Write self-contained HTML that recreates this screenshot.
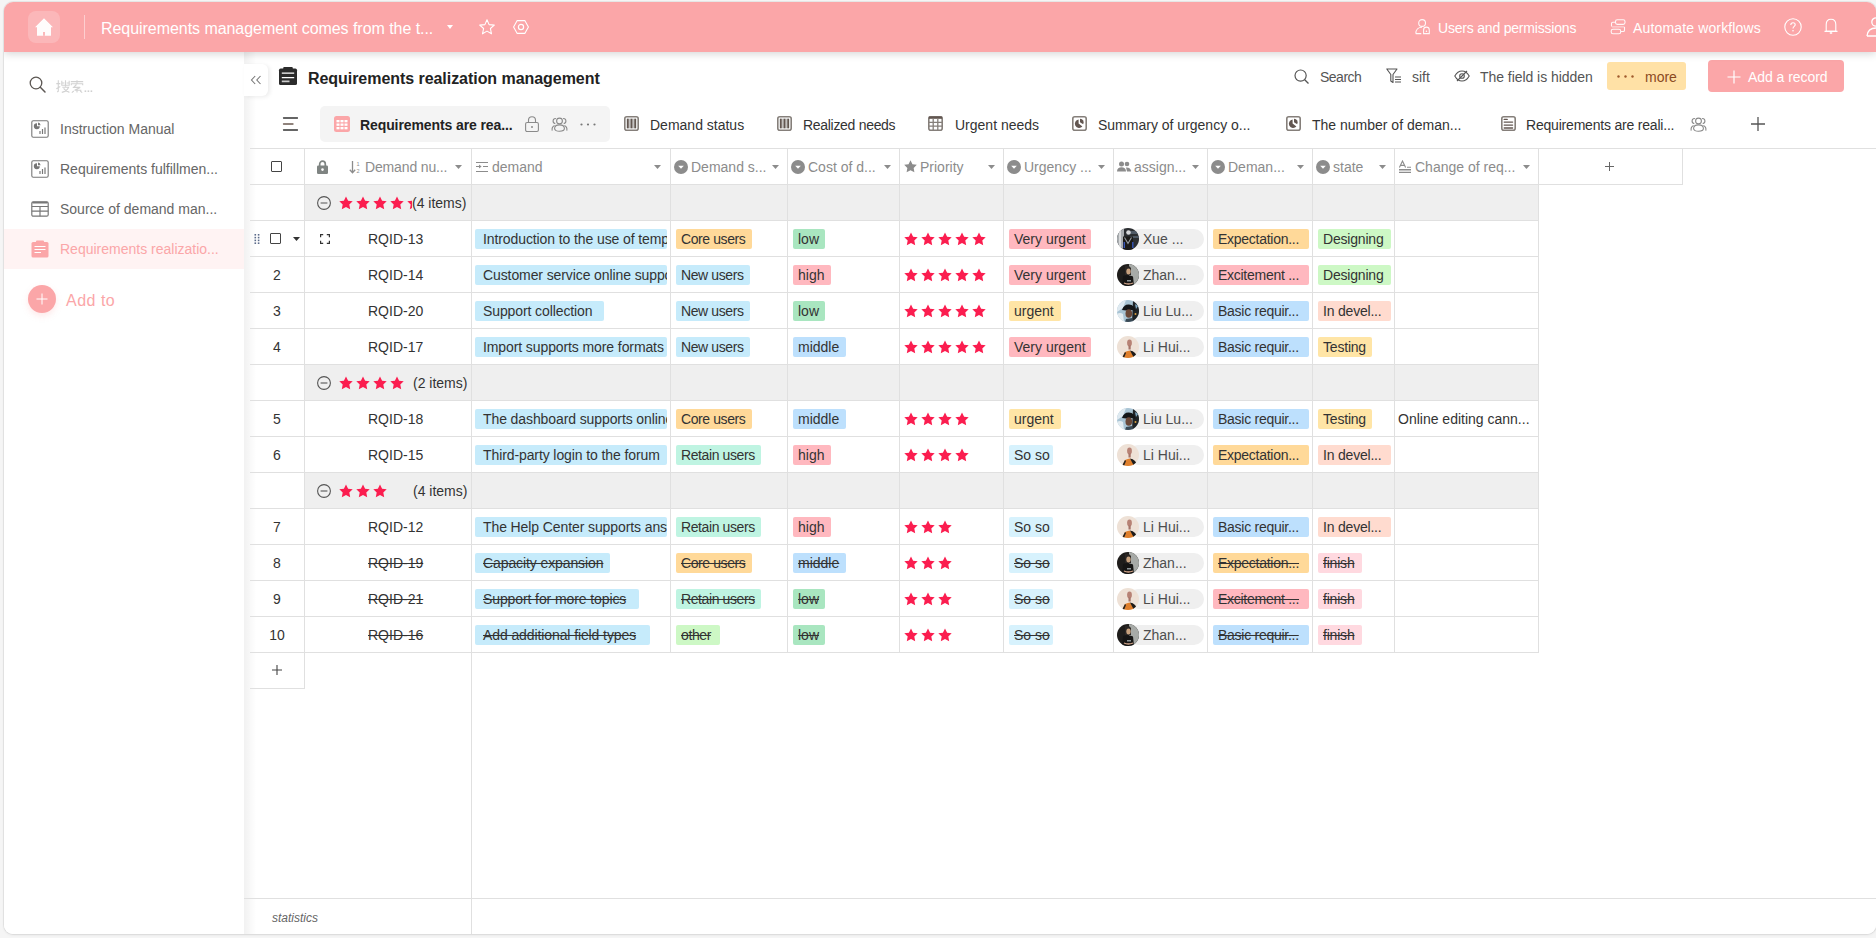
<!DOCTYPE html><html><head><meta charset="utf-8"><title>Requirements realization management</title><style>
*{box-sizing:border-box}
html,body{margin:0;padding:0}
body{width:1876px;height:938px;background:#f5f5f5;position:relative;overflow:hidden;font-family:"Liberation Sans",sans-serif;color:#333;font-size:14px}
.ab{position:absolute}
.app{position:absolute;left:4px;top:2px;width:1872px;height:932px;background:#fff;border-radius:9px;overflow:hidden;box-shadow:0 0 0 1px rgba(0,0,0,0.05),0 1px 3px rgba(0,0,0,0.08)}
.hdr{position:absolute;left:0;top:0;width:1872px;height:50px;background:#fba6a8;z-index:5;box-shadow:0 2px 8px rgba(0,0,0,0.16)}
.wt{color:#fff;white-space:nowrap;line-height:16px}
.side{position:absolute;left:0;top:50px;width:240px;height:882px;background:#fff}
.main{position:absolute;left:240px;top:50px;width:1632px;height:882px;background:#fff}
.t{position:absolute;white-space:nowrap;line-height:16px}
.tag{position:absolute;height:20px;line-height:20px;border-radius:2px;padding-left:6px;white-space:nowrap;overflow:hidden;color:#333;font-size:14px}
.hl{position:absolute;height:1px;background:#e1e1e1}
.vl{position:absolute;width:1px;background:#e1e1e1}
.grp{position:absolute;height:35px;background:#efefef}
.s{text-decoration:line-through}
svg{position:absolute;overflow:visible}
</style></head><body>
<div class="app">
<div class="hdr">
<div class="ab" style="left:24px;top:9px;width:32px;height:32px;border-radius:8px;background:rgba(255,255,255,0.2)"></div>
<svg style="left:31px;top:16px" width="18" height="18" viewBox="0 0 18 18"><path d="M9 0.3 L18 9.2 L16 9.2 L16 17.8 L2 17.8 L2 9.2 L0 9.2 Z" fill="#fff" fill-opacity="0.95"/><rect x="8" y="14" width="2" height="3.8" fill="#fbb9bb"/></svg>
<div class="ab" style="left:80px;top:13px;width:1px;height:24px;background:rgba(255,255,255,0.45)"></div>
<div class="t wt" style="left:97px;top:19px;font-size:16px;letter-spacing:-0.05px">Requirements management comes from the t...</div>
<svg style="left:443px;top:23px" width="6" height="4" viewBox="0 0 6 4"><path d="M0 0H6L3 4Z" fill="#fff"/></svg>
<svg style="left:475px;top:17px" width="16" height="16" viewBox="0 0 16 16"><path d="M8 0.8 L10.1 5.6 L15.3 6.1 L11.4 9.5 L12.5 14.8 L8 12.1 L3.5 14.8 L4.6 9.5 L0.7 6.1 L5.9 5.6 Z" fill="none" stroke="#fff" stroke-width="1.1" stroke-linejoin="round"/></svg>
<svg style="left:509px;top:18px" width="16" height="14" viewBox="0 0 16 14"><path d="M4.2 0.6 H11.8 L15.4 7 L11.8 13.4 H4.2 L0.6 7 Z" fill="none" stroke="#fff" stroke-width="1.1"/><circle cx="8" cy="7" r="2.6" fill="none" stroke="#fff" stroke-width="1.2"/></svg>
<svg style="left:1410px;top:17px" width="16" height="16" viewBox="0 0 16 16"><g fill="none" stroke="#fff" stroke-opacity="0.92" stroke-width="1.1"><circle cx="8.1" cy="4" r="3.4"/><path d="M1.8 14.6C1.8 10.8 4.4 8.2 8 8.2"/><path d="M1.8 14.6H7.3"/><path d="M9.6 14.6V11C9.6 9.3 10.9 8.1 12.45 8.1C14 8.1 15.3 9.3 15.3 11V14.6Z"/></g><circle cx="12.45" cy="12.3" r="0.8" fill="#fff"/></svg>
<div class="t wt" style="left:1434px;top:18px;font-size:14px;letter-spacing:-0.2px">Users and permissions</div>
<svg style="left:1606px;top:16px" width="16" height="17" viewBox="0 0 16 17"><g fill="none" stroke="#fff" stroke-opacity="0.9" stroke-width="1.1"><rect x="5.5" y="1.8" width="9.5" height="4.6" rx="1.8"/><rect x="1.2" y="11.2" width="9.5" height="4.5" rx="1.8"/><path d="M5.5 4.3H2.8Q1.5 4.3 1.5 5.6V8.6"/><path d="M14.5 9V12.2Q14.5 13.5 13.2 13.5H10.7"/></g><path d="M2 8.9H14.5" stroke="#fff" stroke-opacity="0.5" stroke-width="1.1"/></svg>
<div class="t wt" style="left:1629px;top:18px;font-size:14px;letter-spacing:0.15px">Automate workflows</div>
<svg style="left:1780px;top:16px" width="18" height="18" viewBox="0 0 18 18"><circle cx="9" cy="9" r="8.2" fill="none" stroke="#fff" stroke-width="1.1"/><path d="M6.8 7 C6.8 5.6 7.8 4.8 9 4.8 C10.3 4.8 11.2 5.6 11.2 6.8 C11.2 8.3 9 8.5 9 10.4" fill="none" stroke="#fff" stroke-width="1.1"/><circle cx="9" cy="12.8" r="0.8" fill="#fff"/></svg>
<svg style="left:1819px;top:16px" width="16" height="18" viewBox="0 0 16 18"><path d="M8 1.2 C5 1.2 3.2 3.6 3.2 6.6 V13.3 H12.8 V6.6 C12.8 3.6 11 1.2 8 1.2 Z" fill="none" stroke="#fff" stroke-width="1.1"/><path d="M1.5 13.3 H14.5" stroke="#fff" stroke-width="1.2"/><path d="M6.8 15 H9.2" stroke="#fff" stroke-width="1.4"/></svg>
<svg style="left:1862px;top:15px" width="16" height="20" viewBox="0 0 16 20"><circle cx="10" cy="5" r="4.2" fill="none" stroke="#fff" stroke-width="1.3"/><path d="M1 19 C1.5 13.5 5 11 10 11 C13 11 15 12 16 13" fill="none" stroke="#fff" stroke-width="1.3"/><path d="M1 19 H16" stroke="#fff" stroke-width="1.3"/></svg>
</div>
<div class="side">
<svg style="left:25px;top:24px" width="17" height="17" viewBox="0 0 17 17"><circle cx="7" cy="7" r="5.8" fill="none" stroke="#5c5753" stroke-width="1.3"/><path d="M11.3 11.3 L16 16" stroke="#5c5753" stroke-width="1.5" stroke-linecap="round"/></svg>
<svg style="left:52px;top:28px" width="38" height="13" viewBox="0 0 38 13"><g fill="none" stroke="#d2d2d2" stroke-width="1.1"><path d="M0.3 3.6H4.3M2.3 0.3V11.2L1.2 12M0.3 8.8L4.3 6.6"/><path d="M5.8 0.8V5.2H13.2V0.8M5.8 3H8.4M10.6 3H13.2M9.5 0.3V6.5M6.3 7.2H12.6C11.6 9.6 9 11.6 5.8 12.4M7.6 8.4C9 10.4 11 11.8 13.4 12.4"/><path d="M14.8 1.6H27.2M21 0.2V3.2M15.3 5.3V3.8H26.7V5.3M20.5 4.5L17.6 7.4H24.2L18.6 10.2H25.4M21 9.4V12.6M17.8 11L15.8 12.6M24.2 11L26.2 12.6"/></g><g fill="#d0d0d0"><rect x="28.6" y="10.4" width="1.6" height="1.6"/><rect x="31.6" y="10.4" width="1.6" height="1.6"/><rect x="34.6" y="10.4" width="1.6" height="1.6"/></g></svg>
<svg style="left:27px;top:68px" width="18" height="18" viewBox="0 0 18 18"><rect x="0.8" y="0.8" width="16.4" height="16.4" rx="1.5" fill="none" stroke="#777" stroke-width="1.1"/><path d="M6 3.2 A3 3 0 1 0 8.8 6.2 H6 Z" fill="#777"/><path d="M7 2.6 A3 3 0 0 1 9.6 5.2 H7Z" fill="#777"/><path d="M9 14V11M11.5 14V9M14 14V7.5" stroke="#777" stroke-width="1.2"/></svg>
<div class="t" style="left:56px;top:69px;color:#666;font-size:14px">Instruction Manual</div>
<svg style="left:27px;top:108px" width="18" height="18" viewBox="0 0 18 18"><rect x="0.8" y="0.8" width="16.4" height="16.4" rx="1.5" fill="none" stroke="#777" stroke-width="1.1"/><path d="M6 3.2 A3 3 0 1 0 8.8 6.2 H6 Z" fill="#777"/><path d="M7 2.6 A3 3 0 0 1 9.6 5.2 H7Z" fill="#777"/><path d="M9 14V11M11.5 14V9M14 14V7.5" stroke="#777" stroke-width="1.2"/></svg>
<div class="t" style="left:56px;top:109px;color:#666;font-size:14px">Requirements fulfillmen...</div>
<svg style="left:27px;top:148px" width="18" height="18" viewBox="0 0 18 18"><rect x="0.8" y="1.8" width="16.4" height="14.4" rx="1.5" fill="none" stroke="#777" stroke-width="1.2"/><path d="M0.8 6.5H17.2M0.8 11.2H17.2M9 6.5V16.2" stroke="#777" stroke-width="1.2"/><path d="M1.5 2.6H16.5" stroke="#777" stroke-width="1.6"/></svg>
<div class="t" style="left:56px;top:149px;color:#666;font-size:14px">Source of demand man...</div>
<div class="ab" style="left:0;top:177px;width:240px;height:40px;background:#fff3f3"></div>
<svg style="left:27px;top:188px" width="18" height="18" viewBox="0 0 18 18"><rect x="0.5" y="2" width="17" height="15.5" rx="1.5" fill="#fba6a8"/><rect x="5" y="0.5" width="8" height="3" rx="1" fill="#fba6a8"/><path d="M3.5 6.5H14.5M3.5 9.5H14.5M3.5 12.5H10" stroke="#fff" stroke-width="1.2"/></svg>
<div class="t" style="left:56px;top:189px;color:#fba6a8;font-size:14px">Requirements realizatio...</div>
<div class="ab" style="left:24px;top:233px;width:28px;height:28px;border-radius:14px;background:#fba6a8;box-shadow:0 3px 6px rgba(251,166,168,0.25)"></div>
<svg style="left:32px;top:241px" width="12" height="12" viewBox="0 0 12 12"><path d="M6 0.5V11.5M0.5 6H11.5" stroke="#fff" stroke-width="1"/></svg>
<div class="t" style="left:62px;top:240px;color:#fba6a8;font-size:16px;line-height:18px;letter-spacing:0.5px">Add to</div>
</div>
<div class="main">
<div class="ab" style="left:0;top:0;width:12px;height:882px;background:linear-gradient(90deg,rgba(0,0,0,0.055),rgba(0,0,0,0))"></div>
<div class="ab" style="left:0px;top:12px;width:24px;height:32px;background:#fff;border-radius:0 6px 6px 0;box-shadow:2px 1px 4px rgba(0,0,0,0.08)"></div>
<svg style="left:6px;top:23px" width="12" height="10" viewBox="0 0 12 10"><path d="M5.2 1 L1.5 5 L5.2 9 M10.5 1 L6.8 5 L10.5 9" fill="none" stroke="#777" stroke-width="1.1"/></svg>
<svg style="left:35px;top:15px" width="18" height="18" viewBox="0 0 18 18"><rect x="0" y="1.6" width="18" height="16.4" rx="1.6" fill="#2b2b2b"/><rect x="4.2" y="0" width="9.6" height="3" rx="1" fill="#2b2b2b"/><path d="M2.8 6.2H15.2M2.8 10.6H15.2" stroke="#fff" stroke-width="1.2"/><path d="M2.8 14.4H10.5" stroke="#ccc" stroke-width="1.6"/></svg>
<div class="t" style="left:64px;top:19px;font-size:16px;font-weight:bold;color:#222;letter-spacing:-0.05px">Requirements realization management</div>
<svg style="left:1050px;top:17px" width="15" height="15" viewBox="0 0 15 15"><circle cx="6.6" cy="6.6" r="5.6" fill="none" stroke="#555" stroke-width="1.2"/><path d="M10.7 10.7 L14.5 14.5" stroke="#555" stroke-width="1.3"/></svg>
<div class="t" style="left:1076px;top:17px;color:#555;letter-spacing:-0.5px">Search</div>
<svg style="left:1142px;top:16px" width="16" height="16" viewBox="0 0 16 16"><path d="M0.8 1 H11 L7 6.5 V14.5 L4.8 13 V6.5 Z" fill="none" stroke="#555" stroke-width="1.1" stroke-linejoin="round"/><path d="M9 9H15M9 11.5H15M9 14H15" stroke="#555" stroke-width="1.1"/></svg>
<div class="t" style="left:1168px;top:17px;color:#555">sift</div>
<svg style="left:1210px;top:18px" width="16" height="12" viewBox="0 0 16 12"><path d="M0.8 6 C3 2 5.5 1 8 1 C10.5 1 13 2 15.2 6 C13 10 10.5 11 8 11 C5.5 11 3 10 0.8 6 Z" fill="none" stroke="#555" stroke-width="1.1"/><circle cx="8" cy="6" r="2.3" fill="none" stroke="#555" stroke-width="1.1"/><path d="M3 11 L13 1" stroke="#555" stroke-width="1.1"/></svg>
<div class="t" style="left:1236px;top:17px;color:#555;letter-spacing:-0.05px">The field is hidden</div>
<div class="ab" style="left:1363px;top:10px;width:79px;height:28px;border-radius:3px;background:#ffe1a6"></div>
<svg style="left:1373px;top:23px" width="17" height="3" viewBox="0 0 17 3"><circle cx="1.5" cy="1.5" r="1.2" fill="#a05a2c"/><circle cx="8.5" cy="1.5" r="1.2" fill="#a05a2c"/><circle cx="15.5" cy="1.5" r="1.2" fill="#a05a2c"/></svg>
<div class="t" style="left:1401px;top:17px;color:#8b4a1f">more</div>
<div class="ab" style="left:1464px;top:8px;width:136px;height:32px;border-radius:4px;background:#fba6a8"></div>
<svg style="left:1483px;top:18px" width="14" height="14" viewBox="0 0 14 14"><path d="M7 0.5V13.5M0.5 7H13.5" stroke="#fff" stroke-width="1.2"/></svg>
<div class="t" style="left:1504px;top:17px;color:#fff;letter-spacing:-0.05px">Add a record</div>
<svg style="left:39px;top:65px" width="15" height="14" viewBox="0 0 15 14"><path d="M0.5 1H14.5M0.5 13H14.5" stroke="#333" stroke-width="1.3" stroke-linecap="round"/><path d="M0.5 7H10" stroke="#6b5a50" stroke-width="1.3" stroke-linecap="round"/></svg>
<div class="ab" style="left:76px;top:54px;width:290px;height:36px;border-radius:5px;background:#f4f4f4"></div>
<svg style="left:90px;top:64px" width="16" height="16" viewBox="0 0 16 16"><rect x="0" y="0" width="16" height="16" rx="2.5" fill="#fba6a8"/><g fill="#fff"><rect x="2.5" y="4" width="3" height="2.3"/><rect x="6.5" y="4" width="3" height="2.3"/><rect x="10.5" y="4" width="3" height="2.3"/><rect x="2.5" y="7.5" width="3" height="2.3"/><rect x="6.5" y="7.5" width="3" height="2.3"/><rect x="10.5" y="7.5" width="3" height="2.3"/><rect x="2.5" y="11" width="3" height="2.3"/><rect x="6.5" y="11" width="3" height="2.3"/><rect x="10.5" y="11" width="3" height="2.3"/></g></svg>
<div class="t" style="left:116px;top:65px;font-weight:bold;color:#222;letter-spacing:-0.1px">Requirements are rea...</div>
<svg style="left:281px;top:64px" width="14" height="16" viewBox="0 0 14 16"><rect x="0.6" y="6.5" width="12.8" height="9" rx="1.5" fill="none" stroke="#8a8a8a" stroke-width="1.1"/><path d="M3.5 6.5V4.3A3.5 3.5 0 0 1 10.5 4.3V6.5" fill="none" stroke="#8a8a8a" stroke-width="1.1"/><circle cx="7" cy="11" r="1" fill="#8a8a8a"/></svg>
<svg style="left:307px;top:65px" width="17" height="15" viewBox="0 0 17 15"><g fill="none" stroke="#8a8a8a" stroke-width="1.1"><circle cx="8.5" cy="4" r="2.9"/><path d="M3.6 11.6 C3.6 9.3 5.8 7.9 8.5 7.9 C11.2 7.9 13.4 9.3 13.4 11.6 C13.4 13.4 11.2 14.3 8.5 14.3 C5.8 14.3 3.6 13.4 3.6 11.6Z"/><path d="M4.3 6.6 A2.4 2.4 0 0 1 4.9 1.6"/><path d="M12.7 6.6 A2.4 2.4 0 0 0 12.1 1.6"/><path d="M1.2 13.6 C0.7 11.2 1.7 9.4 3.6 8.5"/><path d="M15.8 13.6 C16.3 11.2 15.3 9.4 13.4 8.5"/></g></svg>
<svg style="left:336px;top:71px" width="16" height="3" viewBox="0 0 16 3"><circle cx="1.5" cy="1.5" r="1.1" fill="#777"/><circle cx="8" cy="1.5" r="1.1" fill="#777"/><circle cx="14.5" cy="1.5" r="1.1" fill="#777"/></svg>
<svg style="left:380px;top:64px" width="15" height="15" viewBox="0 0 15 15"><rect x="0.8" y="0.8" width="13.4" height="13.4" rx="2" fill="none" stroke="#857f7a" stroke-width="1.6"/><rect x="2.6" y="2.6" width="9.8" height="9.8" fill="#c4c2c0"/><path d="M3.8 2.8V12.2M7.5 2.8V12.2M11.2 2.8V12.2" stroke="#625650" stroke-width="1.7"/></svg>
<div class="t" style="left:406px;top:65px;color:#333">Demand status</div>
<svg style="left:533px;top:64px" width="15" height="15" viewBox="0 0 15 15"><rect x="0.8" y="0.8" width="13.4" height="13.4" rx="2" fill="none" stroke="#857f7a" stroke-width="1.6"/><rect x="2.6" y="2.6" width="9.8" height="9.8" fill="#c4c2c0"/><path d="M3.8 2.8V12.2M7.5 2.8V12.2M11.2 2.8V12.2" stroke="#625650" stroke-width="1.7"/></svg>
<div class="t" style="left:559px;top:65px;color:#333;letter-spacing:-0.3px">Realized needs</div>
<svg style="left:684px;top:64px" width="15" height="15" viewBox="0 0 15 15"><rect x="0.8" y="0.8" width="13.4" height="13.4" rx="2" fill="none" stroke="#857f7a" stroke-width="1.6"/><rect x="0.8" y="0.4" width="13.4" height="2.4" fill="#625650"/><path d="M0.8 6.3H14.2M0.8 10.2H14.2M5.2 2.5V14.2M9.8 2.5V14.2" stroke="#857f7a" stroke-width="1.3"/></svg>
<div class="t" style="left:711px;top:65px;color:#333">Urgent needs</div>
<svg style="left:828px;top:64px" width="15" height="15" viewBox="0 0 15 15"><rect x="0.8" y="0.8" width="13.4" height="13.4" rx="2" fill="none" stroke="#857f7a" stroke-width="1.6"/><path d="M6.6 3.4 A4.3 4.3 0 1 0 10.4 10.5 L6.6 7.6 Z" fill="#625650"/><path d="M8 2.8 A3.6 3.6 0 0 1 11.2 8.2 L8 6.2 Z" fill="#625650"/></svg>
<div class="t" style="left:854px;top:65px;color:#333">Summary of urgency o...</div>
<svg style="left:1042px;top:64px" width="15" height="15" viewBox="0 0 15 15"><rect x="0.8" y="0.8" width="13.4" height="13.4" rx="2" fill="none" stroke="#857f7a" stroke-width="1.6"/><path d="M6.6 3.4 A4.3 4.3 0 1 0 10.4 10.5 L6.6 7.6 Z" fill="#625650"/><path d="M8 2.8 A3.6 3.6 0 0 1 11.2 8.2 L8 6.2 Z" fill="#625650"/></svg>
<div class="t" style="left:1068px;top:65px;color:#333">The number of deman...</div>
<svg style="left:1257px;top:64px" width="15" height="15" viewBox="0 0 15 15"><rect x="0.8" y="0.8" width="13.4" height="13.4" rx="2" fill="none" stroke="#857f7a" stroke-width="1.6"/><path d="M3.2 3.4H6.2" stroke="#625650" stroke-width="1.4" stroke-linecap="round"/><path d="M3.2 6.1H11.6M3.2 9.1H11.6M3.2 12H11.6" stroke="#625650" stroke-width="1.3" stroke-linecap="round"/></svg>
<div class="t" style="left:1282px;top:65px;color:#333;letter-spacing:-0.2px">Requirements are reali...</div>
<svg style="left:1446px;top:65px" width="17" height="15" viewBox="0 0 17 15"><g fill="none" stroke="#8a8a8a" stroke-width="1.1"><circle cx="8.5" cy="4" r="2.9"/><path d="M3.6 11.6 C3.6 9.3 5.8 7.9 8.5 7.9 C11.2 7.9 13.4 9.3 13.4 11.6 C13.4 13.4 11.2 14.3 8.5 14.3 C5.8 14.3 3.6 13.4 3.6 11.6Z"/><path d="M4.3 6.6 A2.4 2.4 0 0 1 4.9 1.6"/><path d="M12.7 6.6 A2.4 2.4 0 0 0 12.1 1.6"/><path d="M1.2 13.6 C0.7 11.2 1.7 9.4 3.6 8.5"/><path d="M15.8 13.6 C16.3 11.2 15.3 9.4 13.4 8.5"/></g></svg>
<svg style="left:1507px;top:65px" width="14" height="14" viewBox="0 0 14 14"><path d="M7 0V14M0 7H14" stroke="#555" stroke-width="1.3"/></svg>
<div class="ab" style="left:6px;top:96px;width:1630px;height:1px;background:#e0e0e0"></div>
<div class="ab" style="left:27px;top:109px;width:11px;height:11px;border:1.3px solid #444;border-radius:1px"></div>
<svg style="left:73px;top:108px" width="11" height="14" viewBox="0 0 11 14"><path d="M2.7 6V4A2.8 2.8 0 0 1 8.3 4V6" fill="none" stroke="#7f8482" stroke-width="1.7"/><rect x="0" y="5.6" width="11" height="8.4" rx="1.2" fill="#7f8482"/><circle cx="5.5" cy="9.6" r="1.3" fill="#fff"/></svg>
<svg style="left:105px;top:108px" width="12" height="14" viewBox="0 0 12 14"><path d="M3.5 1V12.5M0.8 9.8L3.5 12.8L6.2 9.8" fill="none" stroke="#8c8c8c" stroke-width="1.3"/><text x="7.5" y="5.5" font-size="5.5" fill="#8c8c8c" font-family="Liberation Sans">1</text><text x="7.5" y="12.5" font-size="5.5" fill="#8c8c8c" font-family="Liberation Sans">2</text></svg>
<div class="t" style="left:121px;top:107px;color:#8c8c8c;letter-spacing:-0.15px">Demand nu...</div>
<svg style="left:211px;top:113px" width="7" height="4" viewBox="0 0 7 4"><path d="M0 0H7L3.5 4Z" fill="#8c8c8c"/></svg>
<svg style="left:232px;top:109px" width="12" height="12" viewBox="0 0 12 12"><path d="M0 1.5H12M0 10.5H12M7 5.5H12M0 5.5H3.8" stroke="#8c8c8c" stroke-width="1.2"/><path d="M3 3.6L5.6 5.5L3 7.4Z" fill="#8c8c8c"/></svg>
<div class="t" style="left:248px;top:107px;color:#8c8c8c">demand</div>
<svg style="left:410px;top:113px" width="7" height="4" viewBox="0 0 7 4"><path d="M0 0H7L3.5 4Z" fill="#8c8c8c"/></svg>
<svg style="left:430px;top:108px" width="14" height="14" viewBox="0 0 14 14"><circle cx="7" cy="7" r="7" fill="#8c8c8c"/><path d="M4.2 5.8H9.8L7 8.8Z" fill="#fff"/></svg>
<div class="t" style="left:447px;top:107px;color:#8c8c8c">Demand s...</div>
<svg style="left:528px;top:113px" width="7" height="4" viewBox="0 0 7 4"><path d="M0 0H7L3.5 4Z" fill="#8c8c8c"/></svg>
<svg style="left:547px;top:108px" width="14" height="14" viewBox="0 0 14 14"><circle cx="7" cy="7" r="7" fill="#8c8c8c"/><path d="M4.2 5.8H9.8L7 8.8Z" fill="#fff"/></svg>
<div class="t" style="left:564px;top:107px;color:#8c8c8c">Cost of d...</div>
<svg style="left:640px;top:113px" width="7" height="4" viewBox="0 0 7 4"><path d="M0 0H7L3.5 4Z" fill="#8c8c8c"/></svg>
<svg style="left:660px;top:108px" width="13" height="13" viewBox="0 0 14 14"><path d="M7 0.3L9.1 4.6L13.8 5.2L10.4 8.5L11.2 13.3L7 11L2.8 13.3L3.6 8.5L0.2 5.2L4.9 4.6Z" fill="#8c8c8c"/></svg>
<div class="t" style="left:676px;top:107px;color:#8c8c8c">Priority</div>
<svg style="left:744px;top:113px" width="7" height="4" viewBox="0 0 7 4"><path d="M0 0H7L3.5 4Z" fill="#8c8c8c"/></svg>
<svg style="left:763px;top:108px" width="14" height="14" viewBox="0 0 14 14"><circle cx="7" cy="7" r="7" fill="#8c8c8c"/><path d="M4.2 5.8H9.8L7 8.8Z" fill="#fff"/></svg>
<div class="t" style="left:780px;top:107px;color:#8c8c8c">Urgency ...</div>
<svg style="left:854px;top:113px" width="7" height="4" viewBox="0 0 7 4"><path d="M0 0H7L3.5 4Z" fill="#8c8c8c"/></svg>
<svg style="left:873px;top:109px" width="14" height="11" viewBox="0 0 14 11"><circle cx="4.5" cy="3" r="2.5" fill="#8c8c8c"/><circle cx="10" cy="3" r="2.3" fill="#8c8c8c"/><path d="M0 10.5C0 7.5 2 6.3 4.5 6.3C7 6.3 9 7.5 9 10.5Z" fill="#8c8c8c"/><path d="M9 6.4C12 6.2 14 7.5 14 10.5H10Z" fill="#8c8c8c"/></svg>
<div class="t" style="left:890px;top:107px;color:#8c8c8c">assign...</div>
<svg style="left:948px;top:113px" width="7" height="4" viewBox="0 0 7 4"><path d="M0 0H7L3.5 4Z" fill="#8c8c8c"/></svg>
<svg style="left:967px;top:108px" width="14" height="14" viewBox="0 0 14 14"><circle cx="7" cy="7" r="7" fill="#8c8c8c"/><path d="M4.2 5.8H9.8L7 8.8Z" fill="#fff"/></svg>
<div class="t" style="left:984px;top:107px;color:#8c8c8c">Deman...</div>
<svg style="left:1053px;top:113px" width="7" height="4" viewBox="0 0 7 4"><path d="M0 0H7L3.5 4Z" fill="#8c8c8c"/></svg>
<svg style="left:1072px;top:108px" width="14" height="14" viewBox="0 0 14 14"><circle cx="7" cy="7" r="7" fill="#8c8c8c"/><path d="M4.2 5.8H9.8L7 8.8Z" fill="#fff"/></svg>
<div class="t" style="left:1089px;top:107px;color:#8c8c8c">state</div>
<svg style="left:1135px;top:113px" width="7" height="4" viewBox="0 0 7 4"><path d="M0 0H7L3.5 4Z" fill="#8c8c8c"/></svg>
<svg style="left:1155px;top:108px" width="13" height="13" viewBox="0 0 13 13"><path d="M0.4 7.6L3.5 1L6.6 7.6M1.5 5.4H5.5" fill="none" stroke="#8c8c8c" stroke-width="1.1"/><path d="M8 7.3H12" stroke="#8c8c8c" stroke-width="1.1"/><path d="M0 9.8H12" stroke="#8c8c8c" stroke-width="1.5"/><path d="M0 12.4H12" stroke="#8c8c8c" stroke-width="1.1"/></svg>
<div class="t" style="left:1171px;top:107px;color:#8c8c8c">Change of req...</div>
<svg style="left:1279px;top:113px" width="7" height="4" viewBox="0 0 7 4"><path d="M0 0H7L3.5 4Z" fill="#8c8c8c"/></svg>
<svg style="left:1361px;top:110px" width="9" height="9" viewBox="0 0 9 9"><path d="M4.5 0V9M0 4.5H9" stroke="#666" stroke-width="1"/></svg>
<div class="hl" style="left:1294px;top:132px;width:145px;background:#e0e0e0"></div>
<div class="vl" style="left:1438px;top:96px;height:36px;background:#e0e0e0"></div>
<div class="grp" style="left:61px;top:133px;width:1233px"></div>
<svg style="left:73px;top:144px" width="14" height="14" viewBox="0 0 14 14"><circle cx="7" cy="7" r="6.4" fill="none" stroke="#555" stroke-width="1.1"/><path d="M3.6 7H10.4" stroke="#555" stroke-width="1.1"/></svg>
<svg style="left:95px;top:144px;overflow:hidden" width="73" height="14" viewBox="0 0 73 14"><g transform="translate(0,0)"><path d="M7 0.4L9.1 4.7L13.7 5.3L10.3 8.6L11.2 13.3L7 11L2.8 13.3L3.7 8.6L0.3 5.3L4.9 4.7Z" fill="#fb1d4f"/></g><g transform="translate(17,0)"><path d="M7 0.4L9.1 4.7L13.7 5.3L10.3 8.6L11.2 13.3L7 11L2.8 13.3L3.7 8.6L0.3 5.3L4.9 4.7Z" fill="#fb1d4f"/></g><g transform="translate(34,0)"><path d="M7 0.4L9.1 4.7L13.7 5.3L10.3 8.6L11.2 13.3L7 11L2.8 13.3L3.7 8.6L0.3 5.3L4.9 4.7Z" fill="#fb1d4f"/></g><g transform="translate(51,0)"><path d="M7 0.4L9.1 4.7L13.7 5.3L10.3 8.6L11.2 13.3L7 11L2.8 13.3L3.7 8.6L0.3 5.3L4.9 4.7Z" fill="#fb1d4f"/></g><g transform="translate(68,0)"><path d="M7 0.4L9.1 4.7L13.7 5.3L10.3 8.6L11.2 13.3L7 11L2.8 13.3L3.7 8.6L0.3 5.3L4.9 4.7Z" fill="#fb1d4f"/></g></svg>
<div class="t" style="left:168px;top:143px;color:#333">(4 items)</div>
<svg style="left:10px;top:182px" width="6" height="10" viewBox="0 0 6 10"><g fill="#5b6b8a"><rect x="0.5" y="0" width="1.6" height="1.6"/><rect x="3.8" y="0" width="1.6" height="1.6"/><rect x="0.5" y="2.8" width="1.6" height="1.6"/><rect x="3.8" y="2.8" width="1.6" height="1.6"/><rect x="0.5" y="5.6" width="1.6" height="1.6"/><rect x="3.8" y="5.6" width="1.6" height="1.6"/><rect x="0.5" y="8.4" width="1.6" height="1.6"/><rect x="3.8" y="8.4" width="1.6" height="1.6"/></g></svg>
<div class="ab" style="left:26px;top:181px;width:11px;height:11px;border:1.3px solid #444;border-radius:1px"></div>
<svg style="left:49px;top:185px" width="7" height="4" viewBox="0 0 7 4"><path d="M0 0H7L3.5 4Z" fill="#333"/></svg>
<svg style="left:76px;top:182px" width="10" height="10" viewBox="0 0 10 10"><path d="M0.6 3.2V0.6H3.2M6.8 0.6H9.4V3.2M9.4 6.8V9.4H6.8M3.2 9.4H0.6V6.8" fill="none" stroke="#333" stroke-width="1.2"/></svg>
<div class="t" style="left:124px;top:179px;color:#333;">RQID-13</div>
<div class="tag" style="left:231px;top:177px;width:192px;background:#c6ebfb;padding-left:8px;letter-spacing:-0.1px">Introduction to the use of template</div>
<div class="tag" style="left:432px;top:177px;width:76px;background:#ffd999;padding-left:5px;letter-spacing:-0.4px">Core users</div>
<div class="tag" style="left:549px;top:177px;width:32px;background:#a9e6c0;padding-left:5px">low</div>
<svg style="left:660px;top:180px;overflow:hidden" width="85" height="14" viewBox="0 0 85 14"><g transform="translate(0,0)"><path d="M7 0.4L9.1 4.7L13.7 5.3L10.3 8.6L11.2 13.3L7 11L2.8 13.3L3.7 8.6L0.3 5.3L4.9 4.7Z" fill="#fb1d4f"/></g><g transform="translate(17,0)"><path d="M7 0.4L9.1 4.7L13.7 5.3L10.3 8.6L11.2 13.3L7 11L2.8 13.3L3.7 8.6L0.3 5.3L4.9 4.7Z" fill="#fb1d4f"/></g><g transform="translate(34,0)"><path d="M7 0.4L9.1 4.7L13.7 5.3L10.3 8.6L11.2 13.3L7 11L2.8 13.3L3.7 8.6L0.3 5.3L4.9 4.7Z" fill="#fb1d4f"/></g><g transform="translate(51,0)"><path d="M7 0.4L9.1 4.7L13.7 5.3L10.3 8.6L11.2 13.3L7 11L2.8 13.3L3.7 8.6L0.3 5.3L4.9 4.7Z" fill="#fb1d4f"/></g><g transform="translate(68,0)"><path d="M7 0.4L9.1 4.7L13.7 5.3L10.3 8.6L11.2 13.3L7 11L2.8 13.3L3.7 8.6L0.3 5.3L4.9 4.7Z" fill="#fb1d4f"/></g></svg>
<div class="tag" style="left:765px;top:177px;width:82px;background:#ffb8bf;padding-left:5px">Very urgent</div>
<div class="ab" style="left:884px;top:177px;width:76px;height:20px;border-radius:10px;background:#efefef"></div>
<svg style="left:873px;top:176px" width="22" height="22" viewBox="0 0 22 22"><defs><clipPath id="c1117228"><circle cx="11" cy="11" r="11"/></clipPath></defs><g clip-path="url(#c1117228)"><rect width="22" height="22" fill="#2b2e31"/><rect x="0" y="0" width="7" height="22" fill="#a9adb0"/><rect x="2" y="0" width="2" height="22" fill="#d8dadb"/><path d="M13 3H22V6H13ZM13 8H22V10H13Z" fill="#4f5a66"/><circle cx="11.5" cy="4.5" r="2.3" fill="#d6d8da"/><path d="M6 8.5 L16 8.5 L16 22 L6 22Z" fill="#1b1a18"/><path d="M7.5 9.5 L11 15.5 L14.5 9.5" fill="none" stroke="#9aa0a4" stroke-width="1.1"/><path d="M7.3 14 V20 M15.8 14 V20" stroke="#3556b8" stroke-width="1.4"/></g></svg>
<div class="t" style="left:899px;top:179px;color:#4d4d4d">Xue ...</div>
<div class="tag" style="left:969px;top:177px;width:96px;background:#ffd999;padding-left:5px;letter-spacing:-0.27px">Expectation...</div>
<div class="tag" style="left:1074px;top:177px;width:73px;background:#cdf8c5;padding-left:5px;letter-spacing:-0.2px">Designing</div>
<div class="t" style="left:6px;top:215px;width:54px;text-align:center;color:#333">2</div>
<div class="t" style="left:124px;top:215px;color:#333;">RQID-14</div>
<div class="tag" style="left:231px;top:213px;width:192px;background:#c6ebfb;padding-left:8px;letter-spacing:-0.1px">Customer service online support</div>
<div class="tag" style="left:432px;top:213px;width:73.5px;background:#c6ebfb;padding-left:5px;letter-spacing:-0.4px">New users</div>
<div class="tag" style="left:549px;top:213px;width:38px;background:#ffb8bf;padding-left:5px">high</div>
<svg style="left:660px;top:216px;overflow:hidden" width="85" height="14" viewBox="0 0 85 14"><g transform="translate(0,0)"><path d="M7 0.4L9.1 4.7L13.7 5.3L10.3 8.6L11.2 13.3L7 11L2.8 13.3L3.7 8.6L0.3 5.3L4.9 4.7Z" fill="#fb1d4f"/></g><g transform="translate(17,0)"><path d="M7 0.4L9.1 4.7L13.7 5.3L10.3 8.6L11.2 13.3L7 11L2.8 13.3L3.7 8.6L0.3 5.3L4.9 4.7Z" fill="#fb1d4f"/></g><g transform="translate(34,0)"><path d="M7 0.4L9.1 4.7L13.7 5.3L10.3 8.6L11.2 13.3L7 11L2.8 13.3L3.7 8.6L0.3 5.3L4.9 4.7Z" fill="#fb1d4f"/></g><g transform="translate(51,0)"><path d="M7 0.4L9.1 4.7L13.7 5.3L10.3 8.6L11.2 13.3L7 11L2.8 13.3L3.7 8.6L0.3 5.3L4.9 4.7Z" fill="#fb1d4f"/></g><g transform="translate(68,0)"><path d="M7 0.4L9.1 4.7L13.7 5.3L10.3 8.6L11.2 13.3L7 11L2.8 13.3L3.7 8.6L0.3 5.3L4.9 4.7Z" fill="#fb1d4f"/></g></svg>
<div class="tag" style="left:765px;top:213px;width:82px;background:#ffb8bf;padding-left:5px">Very urgent</div>
<div class="ab" style="left:884px;top:213px;width:76px;height:20px;border-radius:10px;background:#efefef"></div>
<svg style="left:873px;top:212px" width="22" height="22" viewBox="0 0 22 22"><defs><clipPath id="c1117264"><circle cx="11" cy="11" r="11"/></clipPath></defs><g clip-path="url(#c1117264)"><rect width="22" height="22" fill="#1f1d1b"/><rect x="12" y="0" width="10" height="22" fill="#a7aaa7"/><path d="M8 2 Q12 1 14 4 L14 11 L8 11Z" fill="#2a2624"/><ellipse cx="11.5" cy="7.5" rx="2.2" ry="3" fill="#c9a27e"/><path d="M6 12 Q11 10.5 16 12.5 L17 22 L5 22Z" fill="#161514"/><rect x="10" y="16" width="4" height="1.5" fill="#8e9496"/><path d="M7 19 Q11 21 16 19" stroke="#d3a58a" stroke-width="1.3" fill="none"/></g></svg>
<div class="t" style="left:899px;top:215px;color:#4d4d4d">Zhan...</div>
<div class="tag" style="left:969px;top:213px;width:96px;background:#ffb8bf;padding-left:5px;letter-spacing:-0.27px">Excitement ...</div>
<div class="tag" style="left:1074px;top:213px;width:73px;background:#cdf8c5;padding-left:5px;letter-spacing:-0.2px">Designing</div>
<div class="t" style="left:6px;top:251px;width:54px;text-align:center;color:#333">3</div>
<div class="t" style="left:124px;top:251px;color:#333;">RQID-20</div>
<div class="tag" style="left:231px;top:249px;width:129px;background:#c6ebfb;padding-left:8px;letter-spacing:-0.1px">Support collection</div>
<div class="tag" style="left:432px;top:249px;width:73.5px;background:#c6ebfb;padding-left:5px;letter-spacing:-0.4px">New users</div>
<div class="tag" style="left:549px;top:249px;width:32px;background:#a9e6c0;padding-left:5px">low</div>
<svg style="left:660px;top:252px;overflow:hidden" width="85" height="14" viewBox="0 0 85 14"><g transform="translate(0,0)"><path d="M7 0.4L9.1 4.7L13.7 5.3L10.3 8.6L11.2 13.3L7 11L2.8 13.3L3.7 8.6L0.3 5.3L4.9 4.7Z" fill="#fb1d4f"/></g><g transform="translate(17,0)"><path d="M7 0.4L9.1 4.7L13.7 5.3L10.3 8.6L11.2 13.3L7 11L2.8 13.3L3.7 8.6L0.3 5.3L4.9 4.7Z" fill="#fb1d4f"/></g><g transform="translate(34,0)"><path d="M7 0.4L9.1 4.7L13.7 5.3L10.3 8.6L11.2 13.3L7 11L2.8 13.3L3.7 8.6L0.3 5.3L4.9 4.7Z" fill="#fb1d4f"/></g><g transform="translate(51,0)"><path d="M7 0.4L9.1 4.7L13.7 5.3L10.3 8.6L11.2 13.3L7 11L2.8 13.3L3.7 8.6L0.3 5.3L4.9 4.7Z" fill="#fb1d4f"/></g><g transform="translate(68,0)"><path d="M7 0.4L9.1 4.7L13.7 5.3L10.3 8.6L11.2 13.3L7 11L2.8 13.3L3.7 8.6L0.3 5.3L4.9 4.7Z" fill="#fb1d4f"/></g></svg>
<div class="tag" style="left:765px;top:249px;width:51.5px;background:#ffe5a6;padding-left:5px">urgent</div>
<div class="ab" style="left:884px;top:249px;width:76px;height:20px;border-radius:10px;background:#efefef"></div>
<svg style="left:873px;top:248px" width="22" height="22" viewBox="0 0 22 22"><defs><clipPath id="c1117300"><circle cx="11" cy="11" r="11"/></clipPath></defs><g clip-path="url(#c1117300)"><rect width="22" height="22" fill="#a9c4d4"/><path d="M0 0H9L6 8L0 12Z" fill="#dfeaf1"/><path d="M16 0H22V22H15Z" fill="#1f2326"/><path d="M18 4L21 6L19 9Z" fill="#7fa9c4"/><path d="M5 10Q7 4 12 4.5Q18 5 18.5 11L15 10L9 10.5Z" fill="#141618"/><ellipse cx="11.8" cy="13.5" rx="3.3" ry="4.3" fill="#6a4838"/><path d="M0 14Q3 12 6 14L7 22H0Z" fill="#e3ecf1"/><path d="M9 19L15 18L17 22H8Z" fill="#3a4a56"/><circle cx="18.5" cy="14" r="1" fill="#d8a040"/></g></svg>
<div class="t" style="left:899px;top:251px;color:#4d4d4d">Liu Lu...</div>
<div class="tag" style="left:969px;top:249px;width:96px;background:#bde0fd;padding-left:5px;letter-spacing:-0.27px">Basic requir...</div>
<div class="tag" style="left:1074px;top:249px;width:73px;background:#ffdbcf;padding-left:5px;letter-spacing:-0.2px">In devel...</div>
<div class="t" style="left:6px;top:287px;width:54px;text-align:center;color:#333">4</div>
<div class="t" style="left:124px;top:287px;color:#333;">RQID-17</div>
<div class="tag" style="left:231px;top:285px;width:192px;background:#c6ebfb;padding-left:8px;letter-spacing:-0.1px">Import supports more formats</div>
<div class="tag" style="left:432px;top:285px;width:73.5px;background:#c6ebfb;padding-left:5px;letter-spacing:-0.4px">New users</div>
<div class="tag" style="left:549px;top:285px;width:52.5px;background:#bde0fd;padding-left:5px">middle</div>
<svg style="left:660px;top:288px;overflow:hidden" width="85" height="14" viewBox="0 0 85 14"><g transform="translate(0,0)"><path d="M7 0.4L9.1 4.7L13.7 5.3L10.3 8.6L11.2 13.3L7 11L2.8 13.3L3.7 8.6L0.3 5.3L4.9 4.7Z" fill="#fb1d4f"/></g><g transform="translate(17,0)"><path d="M7 0.4L9.1 4.7L13.7 5.3L10.3 8.6L11.2 13.3L7 11L2.8 13.3L3.7 8.6L0.3 5.3L4.9 4.7Z" fill="#fb1d4f"/></g><g transform="translate(34,0)"><path d="M7 0.4L9.1 4.7L13.7 5.3L10.3 8.6L11.2 13.3L7 11L2.8 13.3L3.7 8.6L0.3 5.3L4.9 4.7Z" fill="#fb1d4f"/></g><g transform="translate(51,0)"><path d="M7 0.4L9.1 4.7L13.7 5.3L10.3 8.6L11.2 13.3L7 11L2.8 13.3L3.7 8.6L0.3 5.3L4.9 4.7Z" fill="#fb1d4f"/></g><g transform="translate(68,0)"><path d="M7 0.4L9.1 4.7L13.7 5.3L10.3 8.6L11.2 13.3L7 11L2.8 13.3L3.7 8.6L0.3 5.3L4.9 4.7Z" fill="#fb1d4f"/></g></svg>
<div class="tag" style="left:765px;top:285px;width:82px;background:#ffb8bf;padding-left:5px">Very urgent</div>
<div class="ab" style="left:884px;top:285px;width:76px;height:20px;border-radius:10px;background:#efefef"></div>
<svg style="left:873px;top:284px" width="22" height="22" viewBox="0 0 22 22"><defs><clipPath id="c1117336"><circle cx="11" cy="11" r="11"/></clipPath></defs><g clip-path="url(#c1117336)"><rect width="22" height="22" fill="#eee1d6"/><ellipse cx="12.5" cy="7" rx="2.4" ry="3.4" fill="#b78275"/><rect x="11.5" y="9.5" width="2.2" height="4" fill="#a67468"/><path d="M5 22 L8 16 Q11 14.5 13 14.5 L18 22Z" fill="#df7f2c"/><path d="M13 14.5 Q16 14.5 18 17 L20 20 L17 22Z" fill="#1d1b19"/><path d="M5 22 L8 16 L9 17 L7 22Z" fill="#232323"/></g></svg>
<div class="t" style="left:899px;top:287px;color:#4d4d4d">Li Hui...</div>
<div class="tag" style="left:969px;top:285px;width:96px;background:#bde0fd;padding-left:5px;letter-spacing:-0.27px">Basic requir...</div>
<div class="tag" style="left:1074px;top:285px;width:53.5px;background:#ffe5a6;padding-left:5px;letter-spacing:-0.2px">Testing</div>
<div class="grp" style="left:61px;top:313px;width:1233px"></div>
<svg style="left:73px;top:324px" width="14" height="14" viewBox="0 0 14 14"><circle cx="7" cy="7" r="6.4" fill="none" stroke="#555" stroke-width="1.1"/><path d="M3.6 7H10.4" stroke="#555" stroke-width="1.1"/></svg>
<svg style="left:95px;top:324px;overflow:hidden" width="68" height="14" viewBox="0 0 68 14"><g transform="translate(0,0)"><path d="M7 0.4L9.1 4.7L13.7 5.3L10.3 8.6L11.2 13.3L7 11L2.8 13.3L3.7 8.6L0.3 5.3L4.9 4.7Z" fill="#fb1d4f"/></g><g transform="translate(17,0)"><path d="M7 0.4L9.1 4.7L13.7 5.3L10.3 8.6L11.2 13.3L7 11L2.8 13.3L3.7 8.6L0.3 5.3L4.9 4.7Z" fill="#fb1d4f"/></g><g transform="translate(34,0)"><path d="M7 0.4L9.1 4.7L13.7 5.3L10.3 8.6L11.2 13.3L7 11L2.8 13.3L3.7 8.6L0.3 5.3L4.9 4.7Z" fill="#fb1d4f"/></g><g transform="translate(51,0)"><path d="M7 0.4L9.1 4.7L13.7 5.3L10.3 8.6L11.2 13.3L7 11L2.8 13.3L3.7 8.6L0.3 5.3L4.9 4.7Z" fill="#fb1d4f"/></g></svg>
<div class="t" style="left:169px;top:323px;color:#333">(2 items)</div>
<div class="t" style="left:6px;top:359px;width:54px;text-align:center;color:#333">5</div>
<div class="t" style="left:124px;top:359px;color:#333;">RQID-18</div>
<div class="tag" style="left:231px;top:357px;width:192px;background:#c6ebfb;padding-left:8px;letter-spacing:-0.1px">The dashboard supports online editing</div>
<div class="tag" style="left:432px;top:357px;width:76px;background:#ffd999;padding-left:5px;letter-spacing:-0.4px">Core users</div>
<div class="tag" style="left:549px;top:357px;width:52.5px;background:#bde0fd;padding-left:5px">middle</div>
<svg style="left:660px;top:360px;overflow:hidden" width="68" height="14" viewBox="0 0 68 14"><g transform="translate(0,0)"><path d="M7 0.4L9.1 4.7L13.7 5.3L10.3 8.6L11.2 13.3L7 11L2.8 13.3L3.7 8.6L0.3 5.3L4.9 4.7Z" fill="#fb1d4f"/></g><g transform="translate(17,0)"><path d="M7 0.4L9.1 4.7L13.7 5.3L10.3 8.6L11.2 13.3L7 11L2.8 13.3L3.7 8.6L0.3 5.3L4.9 4.7Z" fill="#fb1d4f"/></g><g transform="translate(34,0)"><path d="M7 0.4L9.1 4.7L13.7 5.3L10.3 8.6L11.2 13.3L7 11L2.8 13.3L3.7 8.6L0.3 5.3L4.9 4.7Z" fill="#fb1d4f"/></g><g transform="translate(51,0)"><path d="M7 0.4L9.1 4.7L13.7 5.3L10.3 8.6L11.2 13.3L7 11L2.8 13.3L3.7 8.6L0.3 5.3L4.9 4.7Z" fill="#fb1d4f"/></g></svg>
<div class="tag" style="left:765px;top:357px;width:51.5px;background:#ffe5a6;padding-left:5px">urgent</div>
<div class="ab" style="left:884px;top:357px;width:76px;height:20px;border-radius:10px;background:#efefef"></div>
<svg style="left:873px;top:356px" width="22" height="22" viewBox="0 0 22 22"><defs><clipPath id="c1117408"><circle cx="11" cy="11" r="11"/></clipPath></defs><g clip-path="url(#c1117408)"><rect width="22" height="22" fill="#a9c4d4"/><path d="M0 0H9L6 8L0 12Z" fill="#dfeaf1"/><path d="M16 0H22V22H15Z" fill="#1f2326"/><path d="M18 4L21 6L19 9Z" fill="#7fa9c4"/><path d="M5 10Q7 4 12 4.5Q18 5 18.5 11L15 10L9 10.5Z" fill="#141618"/><ellipse cx="11.8" cy="13.5" rx="3.3" ry="4.3" fill="#6a4838"/><path d="M0 14Q3 12 6 14L7 22H0Z" fill="#e3ecf1"/><path d="M9 19L15 18L17 22H8Z" fill="#3a4a56"/><circle cx="18.5" cy="14" r="1" fill="#d8a040"/></g></svg>
<div class="t" style="left:899px;top:359px;color:#4d4d4d">Liu Lu...</div>
<div class="tag" style="left:969px;top:357px;width:96px;background:#bde0fd;padding-left:5px;letter-spacing:-0.27px">Basic requir...</div>
<div class="tag" style="left:1074px;top:357px;width:53.5px;background:#ffe5a6;padding-left:5px;letter-spacing:-0.2px">Testing</div>
<div class="t" style="left:1154px;top:359px;color:#333">Online editing cann...</div>
<div class="t" style="left:6px;top:395px;width:54px;text-align:center;color:#333">6</div>
<div class="t" style="left:124px;top:395px;color:#333;">RQID-15</div>
<div class="tag" style="left:231px;top:393px;width:192px;background:#c6ebfb;padding-left:8px;letter-spacing:-0.1px">Third-party login to the forum</div>
<div class="tag" style="left:432px;top:393px;width:84.5px;background:#bff4e2;padding-left:5px;letter-spacing:-0.4px">Retain users</div>
<div class="tag" style="left:549px;top:393px;width:38px;background:#ffb8bf;padding-left:5px">high</div>
<svg style="left:660px;top:396px;overflow:hidden" width="68" height="14" viewBox="0 0 68 14"><g transform="translate(0,0)"><path d="M7 0.4L9.1 4.7L13.7 5.3L10.3 8.6L11.2 13.3L7 11L2.8 13.3L3.7 8.6L0.3 5.3L4.9 4.7Z" fill="#fb1d4f"/></g><g transform="translate(17,0)"><path d="M7 0.4L9.1 4.7L13.7 5.3L10.3 8.6L11.2 13.3L7 11L2.8 13.3L3.7 8.6L0.3 5.3L4.9 4.7Z" fill="#fb1d4f"/></g><g transform="translate(34,0)"><path d="M7 0.4L9.1 4.7L13.7 5.3L10.3 8.6L11.2 13.3L7 11L2.8 13.3L3.7 8.6L0.3 5.3L4.9 4.7Z" fill="#fb1d4f"/></g><g transform="translate(51,0)"><path d="M7 0.4L9.1 4.7L13.7 5.3L10.3 8.6L11.2 13.3L7 11L2.8 13.3L3.7 8.6L0.3 5.3L4.9 4.7Z" fill="#fb1d4f"/></g></svg>
<div class="tag" style="left:765px;top:393px;width:44px;background:#d7f2fd;padding-left:5px">So so</div>
<div class="ab" style="left:884px;top:393px;width:76px;height:20px;border-radius:10px;background:#efefef"></div>
<svg style="left:873px;top:392px" width="22" height="22" viewBox="0 0 22 22"><defs><clipPath id="c1117444"><circle cx="11" cy="11" r="11"/></clipPath></defs><g clip-path="url(#c1117444)"><rect width="22" height="22" fill="#eee1d6"/><ellipse cx="12.5" cy="7" rx="2.4" ry="3.4" fill="#b78275"/><rect x="11.5" y="9.5" width="2.2" height="4" fill="#a67468"/><path d="M5 22 L8 16 Q11 14.5 13 14.5 L18 22Z" fill="#df7f2c"/><path d="M13 14.5 Q16 14.5 18 17 L20 20 L17 22Z" fill="#1d1b19"/><path d="M5 22 L8 16 L9 17 L7 22Z" fill="#232323"/></g></svg>
<div class="t" style="left:899px;top:395px;color:#4d4d4d">Li Hui...</div>
<div class="tag" style="left:969px;top:393px;width:96px;background:#ffd999;padding-left:5px;letter-spacing:-0.27px">Expectation...</div>
<div class="tag" style="left:1074px;top:393px;width:73px;background:#ffdbcf;padding-left:5px;letter-spacing:-0.2px">In devel...</div>
<div class="grp" style="left:61px;top:421px;width:1233px"></div>
<svg style="left:73px;top:432px" width="14" height="14" viewBox="0 0 14 14"><circle cx="7" cy="7" r="6.4" fill="none" stroke="#555" stroke-width="1.1"/><path d="M3.6 7H10.4" stroke="#555" stroke-width="1.1"/></svg>
<svg style="left:95px;top:432px;overflow:hidden" width="51" height="14" viewBox="0 0 51 14"><g transform="translate(0,0)"><path d="M7 0.4L9.1 4.7L13.7 5.3L10.3 8.6L11.2 13.3L7 11L2.8 13.3L3.7 8.6L0.3 5.3L4.9 4.7Z" fill="#fb1d4f"/></g><g transform="translate(17,0)"><path d="M7 0.4L9.1 4.7L13.7 5.3L10.3 8.6L11.2 13.3L7 11L2.8 13.3L3.7 8.6L0.3 5.3L4.9 4.7Z" fill="#fb1d4f"/></g><g transform="translate(34,0)"><path d="M7 0.4L9.1 4.7L13.7 5.3L10.3 8.6L11.2 13.3L7 11L2.8 13.3L3.7 8.6L0.3 5.3L4.9 4.7Z" fill="#fb1d4f"/></g></svg>
<div class="t" style="left:169px;top:431px;color:#333">(4 items)</div>
<div class="t" style="left:6px;top:467px;width:54px;text-align:center;color:#333">7</div>
<div class="t" style="left:124px;top:467px;color:#333;">RQID-12</div>
<div class="tag" style="left:231px;top:465px;width:192px;background:#c6ebfb;padding-left:8px;letter-spacing:-0.1px">The Help Center supports answers</div>
<div class="tag" style="left:432px;top:465px;width:84.5px;background:#bff4e2;padding-left:5px;letter-spacing:-0.4px">Retain users</div>
<div class="tag" style="left:549px;top:465px;width:38px;background:#ffb8bf;padding-left:5px">high</div>
<svg style="left:660px;top:468px;overflow:hidden" width="51" height="14" viewBox="0 0 51 14"><g transform="translate(0,0)"><path d="M7 0.4L9.1 4.7L13.7 5.3L10.3 8.6L11.2 13.3L7 11L2.8 13.3L3.7 8.6L0.3 5.3L4.9 4.7Z" fill="#fb1d4f"/></g><g transform="translate(17,0)"><path d="M7 0.4L9.1 4.7L13.7 5.3L10.3 8.6L11.2 13.3L7 11L2.8 13.3L3.7 8.6L0.3 5.3L4.9 4.7Z" fill="#fb1d4f"/></g><g transform="translate(34,0)"><path d="M7 0.4L9.1 4.7L13.7 5.3L10.3 8.6L11.2 13.3L7 11L2.8 13.3L3.7 8.6L0.3 5.3L4.9 4.7Z" fill="#fb1d4f"/></g></svg>
<div class="tag" style="left:765px;top:465px;width:44px;background:#d7f2fd;padding-left:5px">So so</div>
<div class="ab" style="left:884px;top:465px;width:76px;height:20px;border-radius:10px;background:#efefef"></div>
<svg style="left:873px;top:464px" width="22" height="22" viewBox="0 0 22 22"><defs><clipPath id="c1117516"><circle cx="11" cy="11" r="11"/></clipPath></defs><g clip-path="url(#c1117516)"><rect width="22" height="22" fill="#eee1d6"/><ellipse cx="12.5" cy="7" rx="2.4" ry="3.4" fill="#b78275"/><rect x="11.5" y="9.5" width="2.2" height="4" fill="#a67468"/><path d="M5 22 L8 16 Q11 14.5 13 14.5 L18 22Z" fill="#df7f2c"/><path d="M13 14.5 Q16 14.5 18 17 L20 20 L17 22Z" fill="#1d1b19"/><path d="M5 22 L8 16 L9 17 L7 22Z" fill="#232323"/></g></svg>
<div class="t" style="left:899px;top:467px;color:#4d4d4d">Li Hui...</div>
<div class="tag" style="left:969px;top:465px;width:96px;background:#bde0fd;padding-left:5px;letter-spacing:-0.27px">Basic requir...</div>
<div class="tag" style="left:1074px;top:465px;width:73px;background:#ffdbcf;padding-left:5px;letter-spacing:-0.2px">In devel...</div>
<div class="t" style="left:6px;top:503px;width:54px;text-align:center;color:#333">8</div>
<div class="t" style="left:124px;top:503px;color:#333;text-decoration:line-through;">RQID-19</div>
<div class="tag s" style="left:231px;top:501px;width:134.5px;background:#c6ebfb;padding-left:8px;letter-spacing:-0.1px">Capacity expansion</div>
<div class="tag s" style="left:432px;top:501px;width:76px;background:#ffd999;padding-left:5px;letter-spacing:-0.4px">Core users</div>
<div class="tag s" style="left:549px;top:501px;width:52.5px;background:#bde0fd;padding-left:5px">middle</div>
<svg style="left:660px;top:504px;overflow:hidden" width="51" height="14" viewBox="0 0 51 14"><g transform="translate(0,0)"><path d="M7 0.4L9.1 4.7L13.7 5.3L10.3 8.6L11.2 13.3L7 11L2.8 13.3L3.7 8.6L0.3 5.3L4.9 4.7Z" fill="#fb1d4f"/></g><g transform="translate(17,0)"><path d="M7 0.4L9.1 4.7L13.7 5.3L10.3 8.6L11.2 13.3L7 11L2.8 13.3L3.7 8.6L0.3 5.3L4.9 4.7Z" fill="#fb1d4f"/></g><g transform="translate(34,0)"><path d="M7 0.4L9.1 4.7L13.7 5.3L10.3 8.6L11.2 13.3L7 11L2.8 13.3L3.7 8.6L0.3 5.3L4.9 4.7Z" fill="#fb1d4f"/></g></svg>
<div class="tag s" style="left:765px;top:501px;width:44px;background:#d7f2fd;padding-left:5px">So so</div>
<div class="ab" style="left:884px;top:501px;width:76px;height:20px;border-radius:10px;background:#efefef"></div>
<svg style="left:873px;top:500px" width="22" height="22" viewBox="0 0 22 22"><defs><clipPath id="c1117552"><circle cx="11" cy="11" r="11"/></clipPath></defs><g clip-path="url(#c1117552)"><rect width="22" height="22" fill="#1f1d1b"/><rect x="12" y="0" width="10" height="22" fill="#a7aaa7"/><path d="M8 2 Q12 1 14 4 L14 11 L8 11Z" fill="#2a2624"/><ellipse cx="11.5" cy="7.5" rx="2.2" ry="3" fill="#c9a27e"/><path d="M6 12 Q11 10.5 16 12.5 L17 22 L5 22Z" fill="#161514"/><rect x="10" y="16" width="4" height="1.5" fill="#8e9496"/><path d="M7 19 Q11 21 16 19" stroke="#d3a58a" stroke-width="1.3" fill="none"/></g></svg>
<div class="t" style="left:899px;top:503px;color:#4d4d4d">Zhan...</div>
<div class="tag s" style="left:969px;top:501px;width:96px;background:#ffd999;padding-left:5px;letter-spacing:-0.27px">Expectation...</div>
<div class="tag s" style="left:1074px;top:501px;width:43.5px;background:#ffd9e0;padding-left:5px;letter-spacing:-0.2px">finish</div>
<div class="t" style="left:6px;top:539px;width:54px;text-align:center;color:#333">9</div>
<div class="t" style="left:124px;top:539px;color:#333;text-decoration:line-through;">RQID-21</div>
<div class="tag s" style="left:231px;top:537px;width:163.5px;background:#c6ebfb;padding-left:8px;letter-spacing:-0.1px">Support for more topics</div>
<div class="tag s" style="left:432px;top:537px;width:84.5px;background:#bff4e2;padding-left:5px;letter-spacing:-0.4px">Retain users</div>
<div class="tag s" style="left:549px;top:537px;width:32px;background:#a9e6c0;padding-left:5px">low</div>
<svg style="left:660px;top:540px;overflow:hidden" width="51" height="14" viewBox="0 0 51 14"><g transform="translate(0,0)"><path d="M7 0.4L9.1 4.7L13.7 5.3L10.3 8.6L11.2 13.3L7 11L2.8 13.3L3.7 8.6L0.3 5.3L4.9 4.7Z" fill="#fb1d4f"/></g><g transform="translate(17,0)"><path d="M7 0.4L9.1 4.7L13.7 5.3L10.3 8.6L11.2 13.3L7 11L2.8 13.3L3.7 8.6L0.3 5.3L4.9 4.7Z" fill="#fb1d4f"/></g><g transform="translate(34,0)"><path d="M7 0.4L9.1 4.7L13.7 5.3L10.3 8.6L11.2 13.3L7 11L2.8 13.3L3.7 8.6L0.3 5.3L4.9 4.7Z" fill="#fb1d4f"/></g></svg>
<div class="tag s" style="left:765px;top:537px;width:44px;background:#d7f2fd;padding-left:5px">So so</div>
<div class="ab" style="left:884px;top:537px;width:76px;height:20px;border-radius:10px;background:#efefef"></div>
<svg style="left:873px;top:536px" width="22" height="22" viewBox="0 0 22 22"><defs><clipPath id="c1117588"><circle cx="11" cy="11" r="11"/></clipPath></defs><g clip-path="url(#c1117588)"><rect width="22" height="22" fill="#eee1d6"/><ellipse cx="12.5" cy="7" rx="2.4" ry="3.4" fill="#b78275"/><rect x="11.5" y="9.5" width="2.2" height="4" fill="#a67468"/><path d="M5 22 L8 16 Q11 14.5 13 14.5 L18 22Z" fill="#df7f2c"/><path d="M13 14.5 Q16 14.5 18 17 L20 20 L17 22Z" fill="#1d1b19"/><path d="M5 22 L8 16 L9 17 L7 22Z" fill="#232323"/></g></svg>
<div class="t" style="left:899px;top:539px;color:#4d4d4d">Li Hui...</div>
<div class="tag s" style="left:969px;top:537px;width:96px;background:#ffb8bf;padding-left:5px;letter-spacing:-0.27px">Excitement ...</div>
<div class="tag s" style="left:1074px;top:537px;width:43.5px;background:#ffd9e0;padding-left:5px;letter-spacing:-0.2px">finish</div>
<div class="t" style="left:6px;top:575px;width:54px;text-align:center;color:#333">10</div>
<div class="t" style="left:124px;top:575px;color:#333;text-decoration:line-through;">RQID-16</div>
<div class="tag s" style="left:231px;top:573px;width:174.5px;background:#c6ebfb;padding-left:8px;letter-spacing:-0.1px">Add additional field types</div>
<div class="tag s" style="left:432px;top:573px;width:43.5px;background:#cdf8c5;padding-left:5px;letter-spacing:-0.4px">other</div>
<div class="tag s" style="left:549px;top:573px;width:32px;background:#a9e6c0;padding-left:5px">low</div>
<svg style="left:660px;top:576px;overflow:hidden" width="51" height="14" viewBox="0 0 51 14"><g transform="translate(0,0)"><path d="M7 0.4L9.1 4.7L13.7 5.3L10.3 8.6L11.2 13.3L7 11L2.8 13.3L3.7 8.6L0.3 5.3L4.9 4.7Z" fill="#fb1d4f"/></g><g transform="translate(17,0)"><path d="M7 0.4L9.1 4.7L13.7 5.3L10.3 8.6L11.2 13.3L7 11L2.8 13.3L3.7 8.6L0.3 5.3L4.9 4.7Z" fill="#fb1d4f"/></g><g transform="translate(34,0)"><path d="M7 0.4L9.1 4.7L13.7 5.3L10.3 8.6L11.2 13.3L7 11L2.8 13.3L3.7 8.6L0.3 5.3L4.9 4.7Z" fill="#fb1d4f"/></g></svg>
<div class="tag s" style="left:765px;top:573px;width:44px;background:#d7f2fd;padding-left:5px">So so</div>
<div class="ab" style="left:884px;top:573px;width:76px;height:20px;border-radius:10px;background:#efefef"></div>
<svg style="left:873px;top:572px" width="22" height="22" viewBox="0 0 22 22"><defs><clipPath id="c1117624"><circle cx="11" cy="11" r="11"/></clipPath></defs><g clip-path="url(#c1117624)"><rect width="22" height="22" fill="#1f1d1b"/><rect x="12" y="0" width="10" height="22" fill="#a7aaa7"/><path d="M8 2 Q12 1 14 4 L14 11 L8 11Z" fill="#2a2624"/><ellipse cx="11.5" cy="7.5" rx="2.2" ry="3" fill="#c9a27e"/><path d="M6 12 Q11 10.5 16 12.5 L17 22 L5 22Z" fill="#161514"/><rect x="10" y="16" width="4" height="1.5" fill="#8e9496"/><path d="M7 19 Q11 21 16 19" stroke="#d3a58a" stroke-width="1.3" fill="none"/></g></svg>
<div class="t" style="left:899px;top:575px;color:#4d4d4d">Zhan...</div>
<div class="tag s" style="left:969px;top:573px;width:96px;background:#bde0fd;padding-left:5px;letter-spacing:-0.27px">Basic requir...</div>
<div class="tag s" style="left:1074px;top:573px;width:43.5px;background:#ffd9e0;padding-left:5px;letter-spacing:-0.2px">finish</div>
<div class="hl" style="left:6px;top:132px;width:1289px;background:#e0e0e0"></div>
<div class="hl" style="left:6px;top:168px;width:1289px;background:#e0e0e0"></div>
<div class="hl" style="left:6px;top:204px;width:1289px;background:#e0e0e0"></div>
<div class="hl" style="left:6px;top:240px;width:1289px;background:#e0e0e0"></div>
<div class="hl" style="left:6px;top:276px;width:1289px;background:#e0e0e0"></div>
<div class="hl" style="left:6px;top:312px;width:1289px;background:#e0e0e0"></div>
<div class="hl" style="left:6px;top:348px;width:1289px;background:#e0e0e0"></div>
<div class="hl" style="left:6px;top:384px;width:1289px;background:#e0e0e0"></div>
<div class="hl" style="left:6px;top:420px;width:1289px;background:#e0e0e0"></div>
<div class="hl" style="left:6px;top:456px;width:1289px;background:#e0e0e0"></div>
<div class="hl" style="left:6px;top:492px;width:1289px;background:#e0e0e0"></div>
<div class="hl" style="left:6px;top:528px;width:1289px;background:#e0e0e0"></div>
<div class="hl" style="left:6px;top:564px;width:1289px;background:#e0e0e0"></div>
<div class="hl" style="left:6px;top:600px;width:1289px;background:#e0e0e0"></div>
<div class="vl" style="left:60px;top:96px;height:504px;background:#e0e0e0"></div>
<div class="vl" style="left:227px;top:96px;height:504px;background:#e0e0e0"></div>
<div class="vl" style="left:426px;top:96px;height:504px;background:#e0e0e0"></div>
<div class="vl" style="left:543px;top:96px;height:504px;background:#e0e0e0"></div>
<div class="vl" style="left:655px;top:96px;height:504px;background:#e0e0e0"></div>
<div class="vl" style="left:759px;top:96px;height:504px;background:#e0e0e0"></div>
<div class="vl" style="left:869px;top:96px;height:504px;background:#e0e0e0"></div>
<div class="vl" style="left:963px;top:96px;height:504px;background:#e0e0e0"></div>
<div class="vl" style="left:1068px;top:96px;height:504px;background:#e0e0e0"></div>
<div class="vl" style="left:1150px;top:96px;height:504px;background:#e0e0e0"></div>
<div class="vl" style="left:1294px;top:96px;height:504px;background:#e0e0e0"></div>
<div class="vl" style="left:60px;top:600px;height:36px;background:#e0e0e0"></div>
<div class="hl" style="left:6px;top:636px;width:55px;background:#e0e0e0"></div>
<svg style="left:28px;top:613px" width="10" height="10" viewBox="0 0 10 10"><path d="M5 0V10M0 5H10" stroke="#444" stroke-width="1.1"/></svg>
<div class="vl" style="left:227px;top:600px;height:282px;background:#e0e0e0"></div>
<div class="hl" style="left:0px;top:846px;width:1632px;background:#e0e0e0"></div>
<div class="t" style="left:28px;top:858px;color:#666;font-style:italic;font-size:12px">statistics</div>
</div>
</div>
</body></html>
